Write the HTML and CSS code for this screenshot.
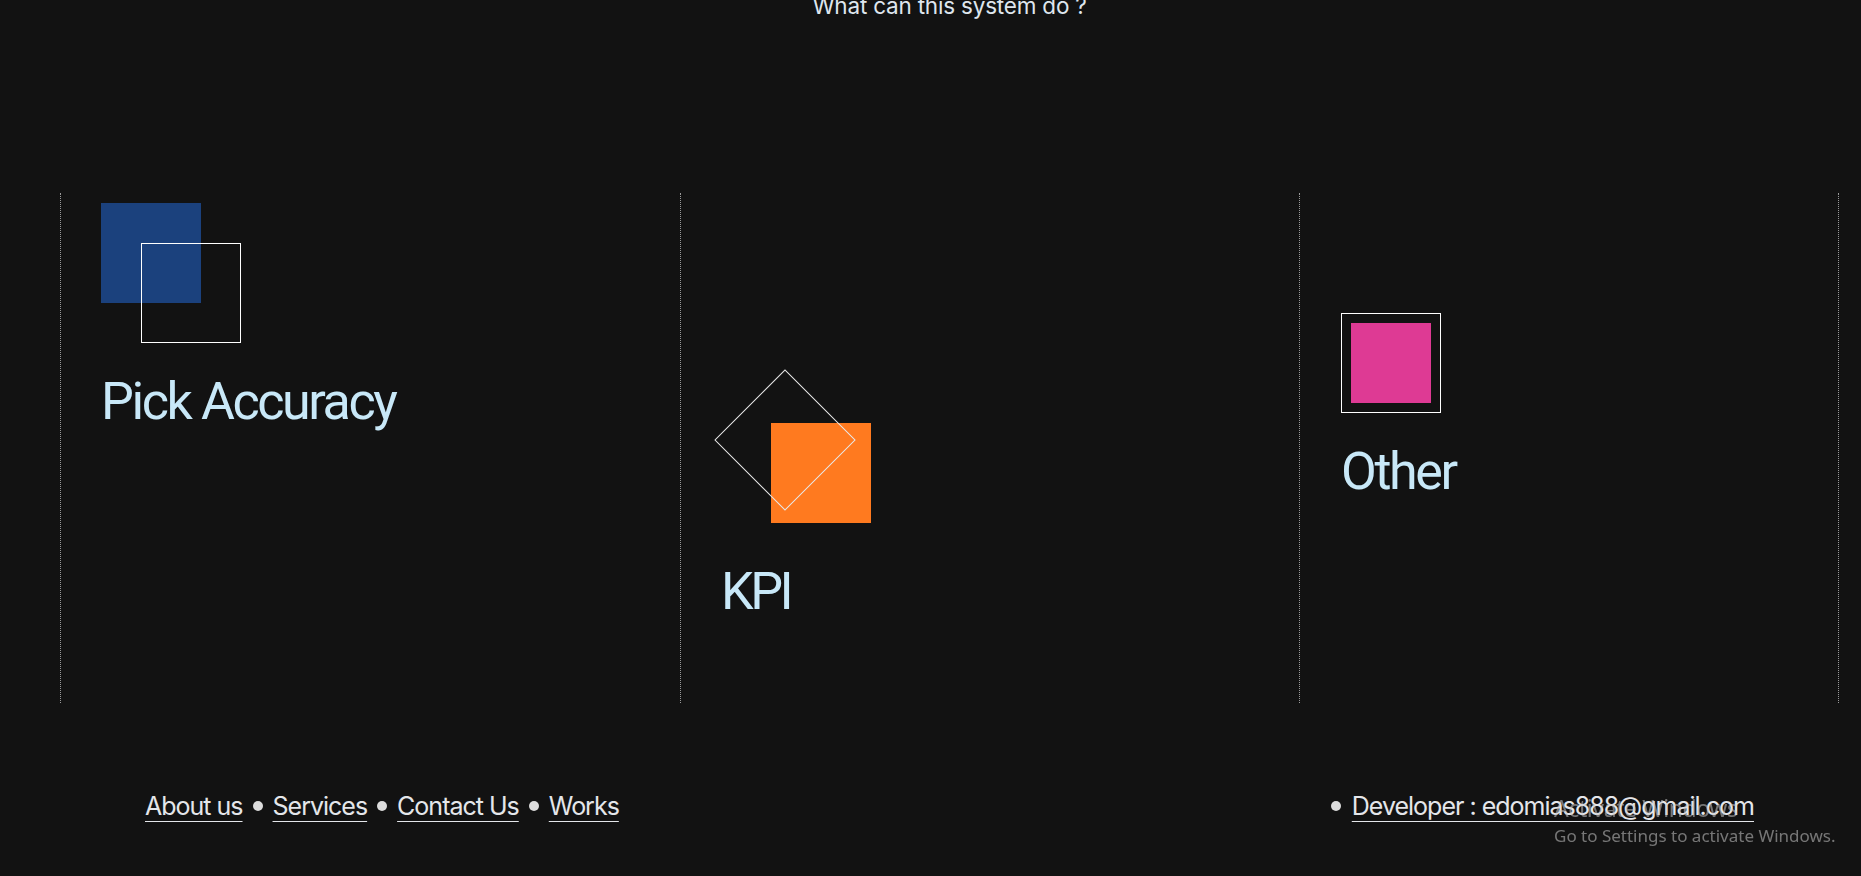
FILE: index.html
```html
<!DOCTYPE html>
<html lang="en">
<head>
<meta charset="utf-8">
<title>What can this system do ?</title>
<link rel="stylesheet" href="styles.css">
</head>
<body>
<div class="page">
  <h2 class="intro">What can this system do ?</h2>
  <section class="features">
    <div class="feature feature--pick">
      <div class="icon icon--pick">
        <span class="blue-square"></span>
        <span class="outline-square outline-square--pick"></span>
      </div>
      <h3 class="feature-title">Pick Accuracy</h3>
    </div>
    <div class="feature feature--kpi">
      <div class="icon icon--kpi">
        <span class="orange-square"></span>
        <span class="diamond"></span>
      </div>
      <h3 class="feature-title feature-title--kpi">KPI</h3>
    </div>
    <div class="feature feature--other">
      <div class="icon icon--other">
        <span class="pink-square"></span>
      </div>
      <h3 class="feature-title">Other</h3>
    </div>
  </section>
  <footer class="footer">
    <nav class="footer-links">
      <a class="footer-link" href="#">About us</a>
      <span class="dot"></span>
      <a class="footer-link" href="#">Services</a>
      <span class="dot"></span>
      <a class="footer-link" href="#">Contact Us</a>
      <span class="dot"></span>
      <a class="footer-link" href="#">Works</a>
    </nav>
    <div class="footer-contact">
      <span class="dot"></span>
      <a class="footer-link" href="#">Developer : edomias888@gmail.com</a>
    </div>
  </footer>
</div>
<div class="watermark">
  <div class="watermark-title">Activate Windows</div>
  <div class="watermark-sub">Go to Settings to activate Windows.</div>
</div>
</body>
</html>
```
FILE: styles.css
```css
* { box-sizing: border-box; }
html, body {
  margin: 0;
  padding: 0;
  background: #121212;
  overflow: hidden;
}
body {
  font-family: Inter, "Noto Sans", sans-serif;
  height: 876px;
}
.page {
  padding: 0 22px 0 60px;
}
.intro {
  margin: -8px 0 0 0;
  font-size: 22.5px;
  line-height: 27px;
  font-weight: 400;
  text-align: center;
  color: #dfe6ee;
  letter-spacing: -0.2px;
}
.features {
  margin-top: 174px;
  display: grid;
  grid-template-columns: 620px 619px 1fr;
  height: 510px;
}
.feature {
  border-left: 1px dotted #9a9a9a;
  padding-left: 40px;
}
.feature--pick { padding-top: 10px; }
.feature--kpi { padding-top: 197px; }
.feature--other {
  padding-top: 120px;
  padding-left: 41px;
  border-right: 1px dotted #9a9a9a;
}
.icon { position: relative; }
.icon--pick { width: 140px; height: 140px; }
.icon--kpi { width: 150px; height: 133px; }
.icon--other {
  width: 100px;
  height: 100px;
  border: 1px solid #ffffff;
  padding: 9px;
}
.blue-square {
  position: absolute;
  left: 0; top: 0;
  width: 100px; height: 100px;
  background: #1b417d;
}
.outline-square--pick {
  position: absolute;
  left: 40px; top: 40px;
  width: 100px; height: 100px;
  border: 1px solid #ffffff;
}
.orange-square {
  position: absolute;
  left: 50px; top: 33px;
  width: 100px; height: 100px;
  background: #ff7a1f;
}
.diamond {
  position: absolute;
  left: 14px; top: 0;
  width: 100px; height: 100px;
  border: 1px solid #e8e8e8;
  transform: rotate(45deg);
}
.pink-square {
  display: block;
  width: 80px; height: 80px;
  background: #de3a94;
}
.feature-title {
  margin: 33px 0 0 0;
  font-family: Roboto, Inter, sans-serif;
  font-size: 52px;
  line-height: 52px;
  font-weight: 400;
  color: #c8e8f8;
  letter-spacing: -2.4px;
}
.feature-title--kpi {
  margin-top: 43px;
  letter-spacing: -3.5px;
}
.footer {
  margin-top: 88px;
  display: flex;
  justify-content: space-between;
  align-items: center;
  padding: 0 85px 0 85px;
  font-size: 25px;
  line-height: 30px;
}
.footer-links, .footer-contact {
  display: flex;
  align-items: center;
  gap: 10px;
}
.footer-contact { gap: 11px; }
.footer-link {
  color: #e4e6ea;
  text-decoration: underline;
  text-decoration-thickness: 1px;
  text-underline-offset: 6px;
  letter-spacing: -1px;
}
.dot {
  width: 10px;
  height: 10px;
  border-radius: 50%;
  background: #dcdcdc;
}
.watermark {
  position: fixed;
  left: 1554px;
  top: 792px;
  font-family: "Noto Sans", "Open Sans", sans-serif;
  color: rgba(200, 200, 200, 0.55);
  pointer-events: none;
}
.watermark-title {
  font-size: 23px;
  line-height: 32px;
  letter-spacing: -0.4px;
}
.watermark-sub {
  font-size: 17px;
  line-height: 24px;
}
```
